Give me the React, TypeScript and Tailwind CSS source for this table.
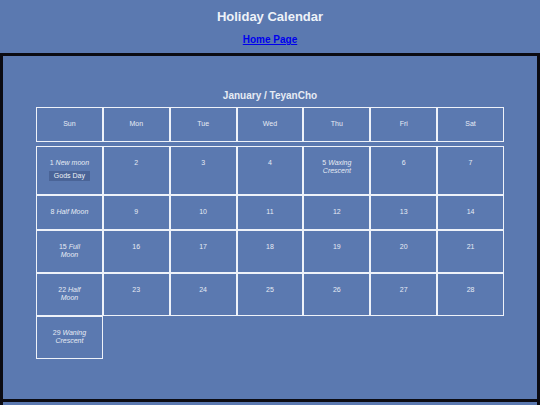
import React from "react";

const DAYS = ["Sun", "Mon", "Tue", "Wed", "Thu", "Fri", "Sat"];

type Cell = { day: number; phase?: string; holiday?: string };

const WEEKS: Cell[][] = [
  [
    { day: 1, phase: "New moon", holiday: "Gods Day" },
    { day: 2 },
    { day: 3 },
    { day: 4 },
    { day: 5, phase: "Waxing Crescent" },
    { day: 6 },
    { day: 7 },
  ],
  [
    { day: 8, phase: "Half Moon" },
    { day: 9 },
    { day: 10 },
    { day: 11 },
    { day: 12 },
    { day: 13 },
    { day: 14 },
  ],
  [
    { day: 15, phase: "Full Moon" },
    { day: 16 },
    { day: 17 },
    { day: 18 },
    { day: 19 },
    { day: 20 },
    { day: 21 },
  ],
  [
    { day: 22, phase: "Half Moon" },
    { day: 23 },
    { day: 24 },
    { day: 25 },
    { day: 26 },
    { day: 27 },
    { day: 28 },
  ],
  [{ day: 29, phase: "Waning Crescent" }],
];

function DayCell({ cell }: { cell: Cell }) {
  return (
    <div className="border border-[#eef2f9] px-[4px] pt-[12px] pb-[13px] text-center text-[7px] leading-[8px] text-[#e6ebf4]">
      <div className="mx-auto w-[40px]">
        {cell.day} {cell.phase && <i>{cell.phase}</i>}
      </div>
      {cell.holiday && (
        <div className="mt-[4px] flex justify-center">
          <span className="bg-[#4a6497] px-[5px] py-[1px] text-[7px] leading-[8px] text-[#eef2f8]">
            {cell.holiday}
          </span>
        </div>
      )}
    </div>
  );
}

export default function App() {
  return (
    <div className="h-[405px] w-[540px] overflow-hidden bg-[#5b79b0] font-['Liberation_Sans',Arial,sans-serif]">
      {/* header */}
      <div className="flex h-[53px] flex-col items-center">
        <h1 className="mt-[9px] text-[13px] font-bold leading-[16px] text-[#eef2f8]">
          Holiday Calendar
        </h1>
        <a
          href="#"
          className="mt-[9px] text-[10px] font-bold leading-[12px] text-[#0000ee] underline"
        >
          Home Page
        </a>
      </div>

      {/* calendar panel */}
      <div className="h-[349px] border-[3px] border-[#0b0b12]">
        <h2 className="mt-[34px] text-center text-[10px] font-bold leading-[12px] text-[#e6ebf4]">
          January / TeyanCho
        </h2>
        <div className="mx-auto mt-[5px] w-[468px]">
          <div className="grid grid-cols-7">
            {DAYS.map((d) => (
              <div
                key={d}
                className="flex h-[35px] items-center justify-center border border-[#eef2f9] text-[7px] text-[#e6ebf4]"
              >
                {d}
              </div>
            ))}
          </div>
          <div className="mt-[4px] grid grid-cols-7">
            {WEEKS.map((week, i) => (
              <React.Fragment key={i}>
                {week.map((c) => (
                  <DayCell key={c.day} cell={c} />
                ))}
              </React.Fragment>
            ))}
          </div>
        </div>
      </div>
      <div className="h-[10px] border-x-[3px] border-[#0b0b12]" />
    </div>
  );
}
